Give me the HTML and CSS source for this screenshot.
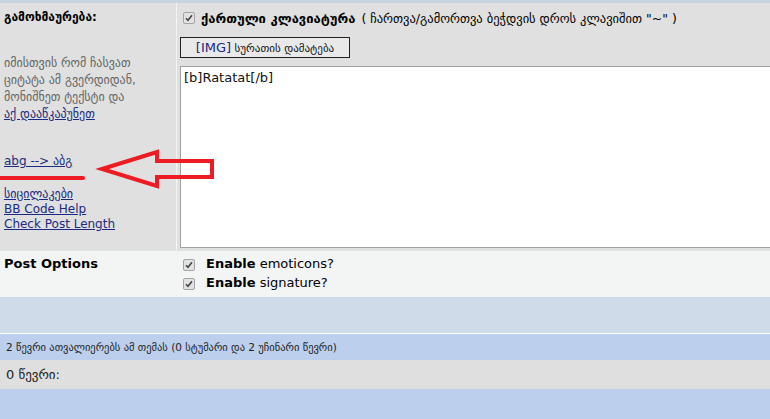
FILE: index.html
```html
<!DOCTYPE html>
<html lang="ka">
<head>
    <meta charset="UTF-8">
    <title>პასუხი</title>
    <link rel="stylesheet" href="styles.css">
</head>
<body>
    <div class="page">
        <div class="form-row reply-row">
            <div class="cell label-cell">
                <div class="title">გამოხმაურება:</div>
                <p class="hint">იმისთვის რომ ჩასვათ<br>ციტატა ამ გვერდიდან,<br>მონიშნეთ ტექსტი და<br><a href="#">აქ დააწკაპუნეთ</a></p>
                <a href="#" class="translit">abg --&gt; აბგ</a>
                <div class="tools">
                    <a href="#" class="geo-link">სიცილაკები</a>
                    <a href="#">BB Code Help</a>
                    <a href="#">Check Post Length</a>
                </div>
            </div>
            <div class="cell field-cell">
                <div class="keyboard">
                    <span class="check"><svg viewBox="0 0 8 8" width="8" height="8"><path d="M1 4.2 L3 6.2 L7 1.2" fill="none" stroke="#444" stroke-width="1.6"/></svg></span>
                    <b>ქართული კლავიატურა</b>
                    <span class="note">( ჩართვა/გამორთვა ბეჭდვის დროს კლავიშით "~" )</span>
                </div>
                <button class="img-btn"><span class="tag">[IMG]</span> სურათის დამატება</button>
                <textarea class="message">[b]Ratatat[/b]</textarea>
            </div>
        </div>

        <div class="form-row options-row">
            <div class="cell label-cell"><b class="opt-title">Post Options</b></div>
            <div class="cell field-cell">
                <label class="opt"><span class="check"><svg viewBox="0 0 8 8" width="8" height="8"><path d="M1 4.2 L3 6.2 L7 1.2" fill="none" stroke="#444" stroke-width="1.6"/></svg></span><b>Enable</b> emoticons?</label>
                <label class="opt"><span class="check"><svg viewBox="0 0 8 8" width="8" height="8"><path d="M1 4.2 L3 6.2 L7 1.2" fill="none" stroke="#444" stroke-width="1.6"/></svg></span><b>Enable</b> signature?</label>
            </div>
        </div>

        <div class="band band-light"></div>
        <div class="band band-blue viewers">2 წევრი ათვალიერებს ამ თემას (0 სტუმარი და 2 უჩინარი წევრი)</div>
        <div class="band band-grey members">0 წევრი:</div>
        <div class="band band-blue last"></div>
    </div>

    <!-- red annotation drawn over the page -->
    <svg class="marker" width="770" height="419" viewBox="0 0 770 419">
        <line x1="0" y1="178" x2="83" y2="178" stroke="#ed1c24" stroke-width="4" stroke-linecap="round"/>
        <polygon points="102,169 157,152 157,161 212,161 212,177 157,177 157,186" fill="none" stroke="#ed1c24" stroke-width="4" stroke-linejoin="miter"/>
    </svg>
</body>
</html>
```

FILE: styles.css
```css
body {
    margin: 0;
    font-family: "DejaVu Sans", Verdana, sans-serif;
    font-size: 13px;
    color: #000;
    background: #fff;
    overflow: hidden;
}

.page {
    border-top: 3px solid #c9d4e2;
    width: 770px;
    overflow: hidden;
}

.form-row {
    display: grid;
    grid-template-columns: 176px 1fr;
    column-gap: 1px;
    background: #f2f3f3;
}

.cell {
    box-sizing: border-box;
}

.reply-row .cell {
    background: #dfe0df;
    height: 248px;
}

.options-row .cell {
    background: #f3f4f4;
    height: 46px;
}

.label-cell {
    padding: 0 4px;
}

.title {
    font-weight: bold;
    font-size: 12px;
    padding-top: 7px;
}

.hint {
    color: #666;
    font-size: 12px;
    margin: 31px 0 0;
    line-height: 17px;
}

a {
    color: #1b2a80;
}

.translit {
    display: block;
    margin-top: 31px;
    font-size: 12px;
}

.tools {
    display: flex;
    flex-direction: column;
    margin-top: 19px;
    font-size: 12px;
    line-height: 15px;
}

.field-cell {
    padding: 0 0 0 3px;
}

.keyboard {
    display: flex;
    align-items: center;
    gap: 6px;
    padding: 7px 0 0 3px;
    height: 16px;
}

.note {
    font-size: 12.5px;
}

.check {
    display: inline-flex;
    align-items: center;
    justify-content: center;
    width: 10px;
    height: 10px;
    border: 1px solid #a4a4a4;
    border-radius: 2px;
    background: #e2e2e2;
    flex: none;
}

.img-btn {
    display: block;
    margin-top: 11px;
    width: 170px;
    height: 21px;
    padding: 0;
    border: 1px solid #222;
    background: #e9e9e9;
    font-family: inherit;
    font-size: 11px;
    color: #111;
}

.img-btn .tag {
    font-size: 13px;
    color: #1b2a80;
}

.message {
    display: block;
    margin-top: 8px;
    width: 620px;
    height: 182px;
    box-sizing: border-box;
    border: 1px solid #a0a0a0;
    padding: 3px 3px;
    font-family: inherit;
    font-size: 13px;
    resize: none;
    background: #fff;
    color: #111;
}

.opt-title {
    display: block;
    padding-top: 5px;
}

.options-row .field-cell {
    padding: 3px 0 0 6px;
}

.opt {
    display: block;
    height: 19px;
    line-height: 19px;
}

.opt .check {
    vertical-align: -1px;
    margin-right: 11px;
}

.band-light {
    height: 36px;
    background: #cfdbe9;
    border-bottom: 1px solid #fff;
}

.band-blue {
    background: #bccfec;
}

.band-grey {
    background: #dedfde;
}

.viewers {
    height: 26px;
    line-height: 26px;
    padding-left: 6px;
    font-size: 10.5px;
    color: #222;
}

.members {
    height: 29px;
    line-height: 29px;
    padding-left: 6px;
    color: #222;
}

.last {
    height: 31px;
}

.marker {
    position: absolute;
    top: 0;
    left: 0;
}
```
